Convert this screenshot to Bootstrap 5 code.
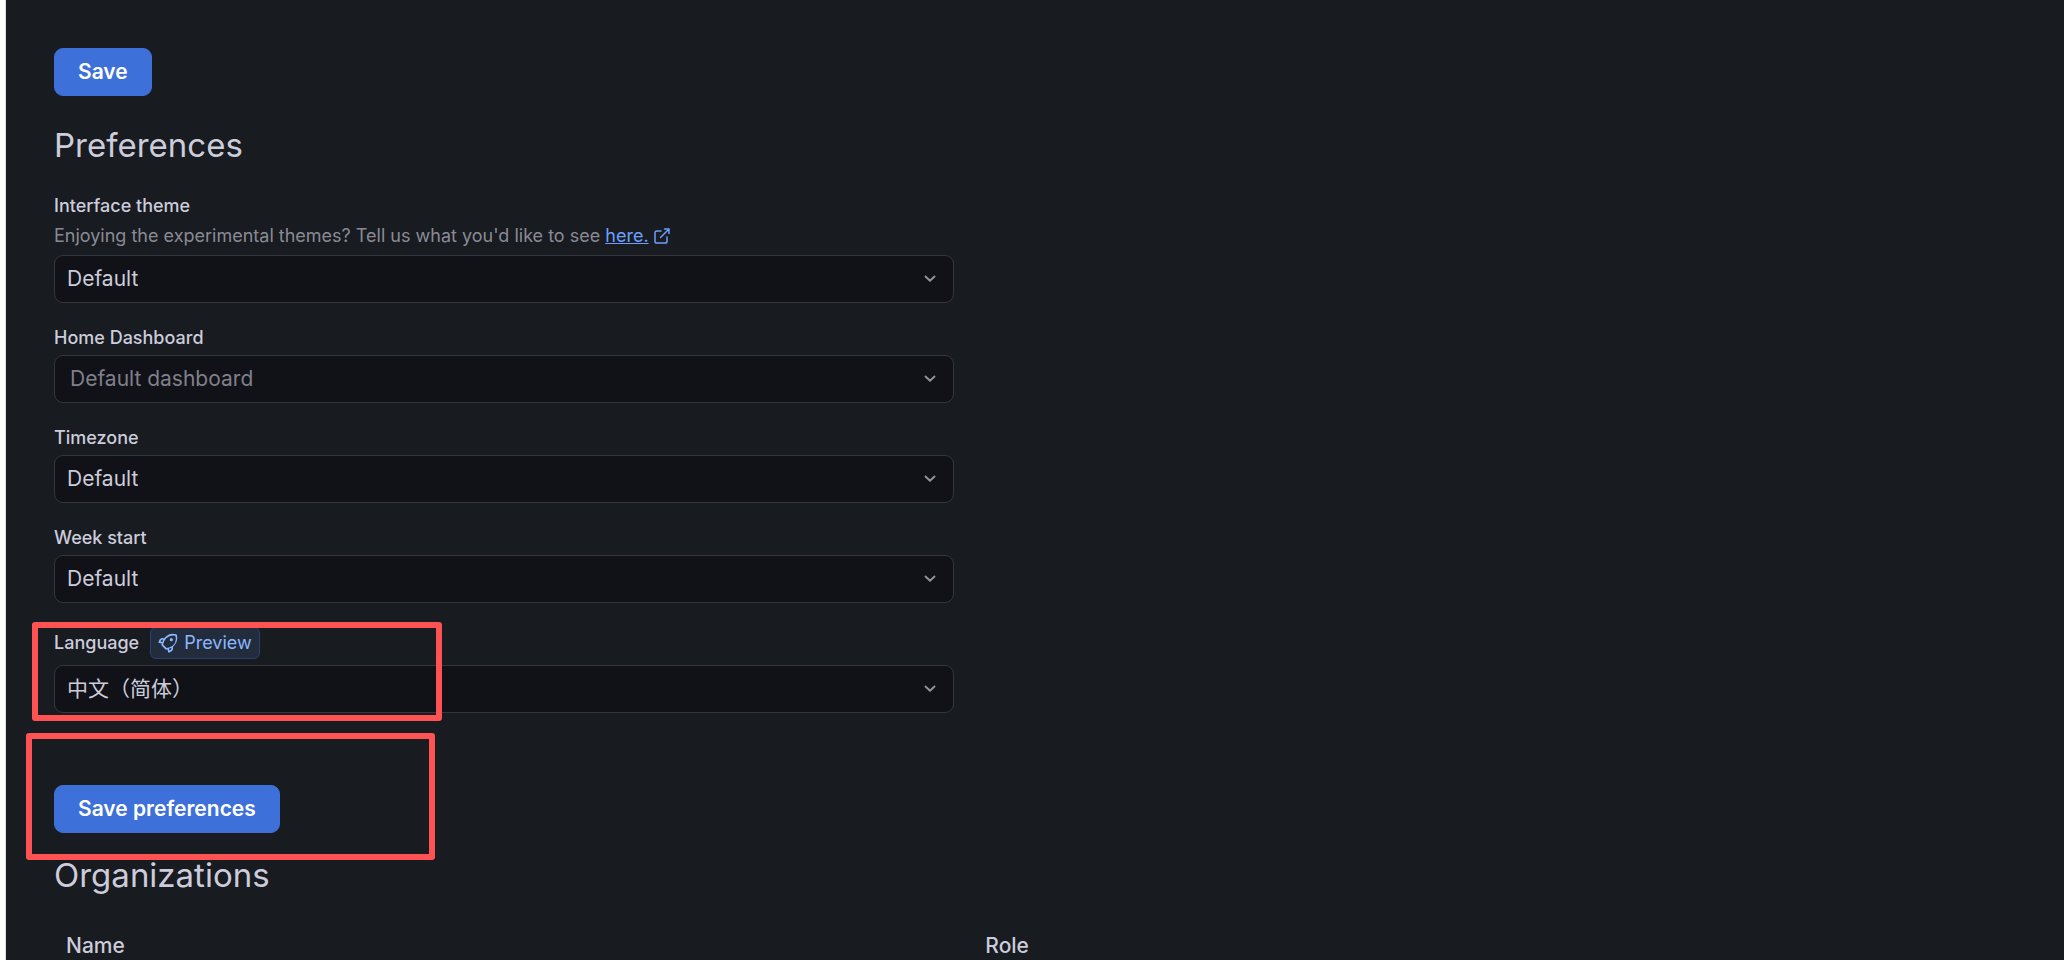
<!DOCTYPE html>
<html lang="en">
<head>
<meta charset="utf-8">
<meta name="viewport" content="width=device-width, initial-scale=1">
<title>Preferences</title>
<link href="https://cdn.jsdelivr.net/npm/bootstrap@5.3.0/dist/css/bootstrap.min.css" rel="stylesheet">
<style>
  body {
    background: #fff;
    color: #ccccdc;
    font-family: Inter, "Noto Sans CJK SC", sans-serif;
    font-size: 21px;
    line-height: 28px;
  }
  .page {
    margin-left: 5px;
    padding: 48px 54px 0 48px;
    border-left: 1px solid #e0e0e0;
    background: #181b1f;
  }
  .btn-save {
    --bs-btn-bg: #3d71d9;
    --bs-btn-border-color: #3d71d9;
    --bs-btn-color: #fff;
    --bs-btn-hover-bg: #2f62c8;
    --bs-btn-hover-color: #fff;
    --bs-btn-padding-x: 23px;
    --bs-btn-padding-y: 9px;
    --bs-btn-font-size: 21px;
    --bs-btn-font-weight: 600;
    --bs-btn-line-height: 28px;
    --bs-btn-border-radius: 9px;
  }
  .section-title { font-size: 33px; line-height: 42px; font-weight: 400; margin: 28px 0 29px; }
  .orgs-title { margin: 21px 0 36px; }
  .prefs { max-width: 900px; }
  .field { margin-bottom: 24px; }
  .field-label { display: block; font-size: 18px; line-height: 22px; font-weight: 500; }
  .field-note { margin-top: 6px; font-size: 18px; line-height: 26px; color: rgba(204, 204, 220, .65); }
  .field-note a { color: #6e9fff; }
  .field-select {
    height: 48px;
    margin-top: 6px;
    padding: 0 48px 0 12px;
    font-size: 21px;
    line-height: 28px;
    color: #ccccdc;
    background-color: #111217;
    border: 1px solid #34363d;
    border-radius: 9px;
    background-image: url("data:image/svg+xml,%3Csvg xmlns='http://www.w3.org/2000/svg' viewBox='0 0 12 8'%3E%3Cpath d='M1.500 1.500 6 5.800l4.500-4.300' fill='none' stroke='%239192a0' stroke-width='1.900' stroke-linecap='round' stroke-linejoin='round'/%3E%3C/svg%3E");
    background-size: 12px 8px;
    background-position: right 17px center;
  }
  .field-select.is-empty { color: rgba(204, 204, 220, .6); padding-left: 15px; }
  .language-head { gap: 11px; }
  .preview-tag {
    height: 32px;
    padding: 0 7px;
    gap: 6px;
    font-size: 18px;
    color: #8ab8ff;
    background: #222c3d;
    border: 1px solid #2b4170;
    border-radius: 6px;
  }
  .callout { position: absolute; border: 6px solid #ff5252; border-radius: 3px; pointer-events: none; }
  .callout-language { left: -22px; top: -5px; width: 410px; height: 99px; }
  .callout-save { left: -28px; top: -52px; width: 409px; height: 127px; }
  .orgs th { padding: 0 12px; font-weight: 500; }
  .orgs th:first-child { width: 47%; }
</style>
</head>
<body>
<main class="page min-vh-100">
  <button type="button" class="btn btn-save d-block">Save</button>

  <h2 class="section-title">Preferences</h2>

  <form class="prefs">
    <div class="field">
      <label class="field-label" for="theme">Interface theme</label>
      <div class="field-note d-flex align-items-center">
        <span>Enjoying the experimental themes? Tell us what you'd like to see <a href="#">here.</a></span>
        <svg class="ms-1" width="18" height="18" viewBox="0 0 18 18" fill="none" stroke="#6e9fff" stroke-width="1.500" stroke-linecap="round" stroke-linejoin="round" aria-hidden="true"><path d="M8 4H3.800A1.800 1.800 0 0 0 2 5.800v8.400A1.800 1.800 0 0 0 3.800 16h8.400a1.800 1.800 0 0 0 1.800-1.800V10M11.500 2H16v4.500M16 2 7.500 10.500"/></svg>
      </div>
      <select class="form-select field-select" id="theme"><option>Default</option></select>
    </div>

    <div class="field">
      <label class="field-label" for="home">Home Dashboard</label>
      <select class="form-select field-select is-empty" id="home"><option>Default dashboard</option></select>
    </div>

    <div class="field">
      <label class="field-label" for="timezone">Timezone</label>
      <select class="form-select field-select" id="timezone"><option>Default</option></select>
    </div>

    <div class="field">
      <label class="field-label" for="week">Week start</label>
      <select class="form-select field-select" id="week"><option>Default</option></select>
    </div>

    <div class="field position-relative">
      <div class="language-head d-flex align-items-center">
        <label class="field-label" for="language">Language</label>
        <span class="preview-tag d-inline-flex align-items-center">
          <svg width="20" height="20" viewBox="0 0 24 24" fill="#8ab8ff" aria-hidden="true"><path d="M22.600 2.100a1 1 0 0 0-.700-.700 14.200 14.200 0 0 0-13.400 3.600L7.300 6.200a5 5 0 0 0-5.200 1.300L.700 10.500a1 1 0 0 0 .600 1.400l3.300.700a15 15 0 0 0-.500 1.500 1 1 0 0 0 .300 1l4.600 4.600a1 1 0 0 0 .700.300h.200a15 15 0 0 0 1.500-.500l.700 3.300a1 1 0 0 0 1.400.600l3-1.400a5 5 0 0 0 1.300-5.200l1.200-1.300A14 14 0 0 0 22.600 2.100ZM3.100 10.200l.5-1.300a3 3 0 0 1 2.300-1l-.5 2.800ZM15.100 20.400l-1.300.5-.5-2.300 2.800-.5a3 3 0 0 1-1 2.300Zm2.500-5a15 15 0 0 1-7.300 2.500l-4.200-4.200a15 15 0 0 1 3.800-7.300 12.100 12.100 0 0 1 10.900-3.200 12 12 0 0 1-3.200 12.200ZM16 6.100a1.900 1.900 0 1 0 0 3.800 1.900 1.900 0 0 0 0-3.800Z"/></svg>
          Preview
        </span>
      </div>
      <select class="form-select field-select" id="language"><option>中文（简体）</option></select>
      <div class="callout callout-language"></div>
    </div>

    <div class="mt-5 pt-4">
      <div class="position-relative">
        <button type="button" class="btn btn-save d-block">Save preferences</button>
        <div class="callout callout-save"></div>
      </div>
    </div>
  </form>

  <h2 class="section-title orgs-title">Organizations</h2>
  <table class="orgs w-100">
    <thead><tr><th scope="col">Name</th><th scope="col">Role</th></tr></thead>
  </table>
</main>
<script src="https://cdn.jsdelivr.net/npm/bootstrap@5.3.0/dist/js/bootstrap.bundle.min.js"></script>
</body>
</html>
